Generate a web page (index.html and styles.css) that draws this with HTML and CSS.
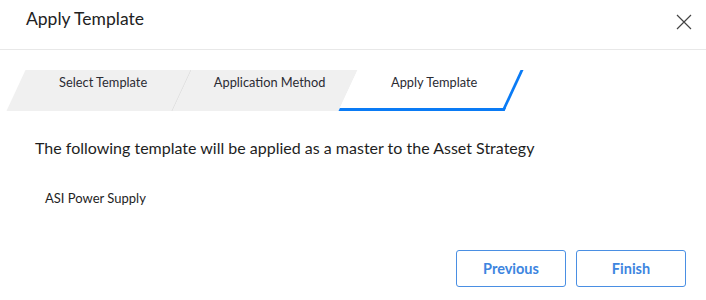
FILE: index.html
```html
<!DOCTYPE html>
<html>
<head>
<meta charset="utf-8">
<link rel="stylesheet" href="styles.css">
</head>
<body>
<div class="dialog">
  <div class="header">
    <div class="title">Apply Template</div>
    <button class="close" aria-label="Close">
      <svg width="16" height="16" viewBox="0 0 16 16"><path d="M1 1 L15 15 M15 1 L1 15" stroke="#444" stroke-width="1.2" fill="none"/></svg>
    </button>
  </div>
  <div class="tabs">
    <div class="tab done"><span>Select Template</span></div>
    <div class="tab done"><span>Application Method</span></div>
    <div class="tab active"><span>Apply Template</span></div>
  </div>
  <div class="content">
    <p class="lead">The following template will be applied as a master to the Asset Strategy</p>
    <p class="item">ASI Power Supply</p>
  </div>
  <div class="footer">
    <button class="btn">Previous</button>
    <button class="btn">Finish</button>
  </div>
</div>
</body>
</html>
```
FILE: styles.css
```css
html, body {
  margin: 0;
  padding: 0;
  background: #fff;
}
body {
  font-family: Lato, "Open Sans", sans-serif;
  color: #222;
}
.header {
  height: 49px;
  border-bottom: 1px solid #e8e8e8;
  display: flex;
  align-items: center;
  justify-content: space-between;
  padding: 0 14px 0 26px;
}
.title {
  font-size: 17.5px;
  color: #222;
  margin-top: -13px;
}
.close {
  border: 0;
  background: none;
  padding: 0;
  width: 16px;
  height: 16px;
  margin-top: -6px;
  cursor: pointer;
}
.close svg { display: block; }
.tabs {
  display: flex;
  margin-top: 20px;
  padding-left: 15.5px;
  height: 41px;
}
.tab {
  width: 166px;
  height: 41px;
  box-sizing: border-box;
  transform: skewX(-24.9deg);
  background: #f0f0f0;
  font-size: 12.8px;
  color: #2b2b33;
}
.tab span {
  display: block;
  transform: skewX(24.9deg);
  text-align: center;
  padding-top: 3px;
  line-height: 18px;
}
.tab.done:first-child {
  border-right: 1px solid #dedede;
}
.tab.active {
  background: #fff;
  border-bottom: 3px solid #0a7bf5;
  border-right: 3px solid #0a7bf5;
}
.content {
  padding-top: 26px;
}
.lead {
  margin: 0;
  padding-left: 35px;
  font-size: 16px;
  line-height: 22px;
  color: #1e1e1e;
}
.item {
  margin: 30px 0 0;
  padding-left: 45px;
  font-size: 13px;
  line-height: 18px;
  color: #1e1e1e;
}
.footer {
  display: flex;
  justify-content: flex-end;
  gap: 10px;
  padding-right: 20px;
  margin-top: 43px;
}
.btn {
  width: 110px;
  height: 37px;
  box-sizing: border-box;
  border: 1px solid #4a8fe3;
  border-radius: 3px;
  background: #fff;
  color: #3d85e0;
  font-family: inherit;
  font-size: 14.5px;
  font-weight: 700;
  cursor: pointer;
}
```
